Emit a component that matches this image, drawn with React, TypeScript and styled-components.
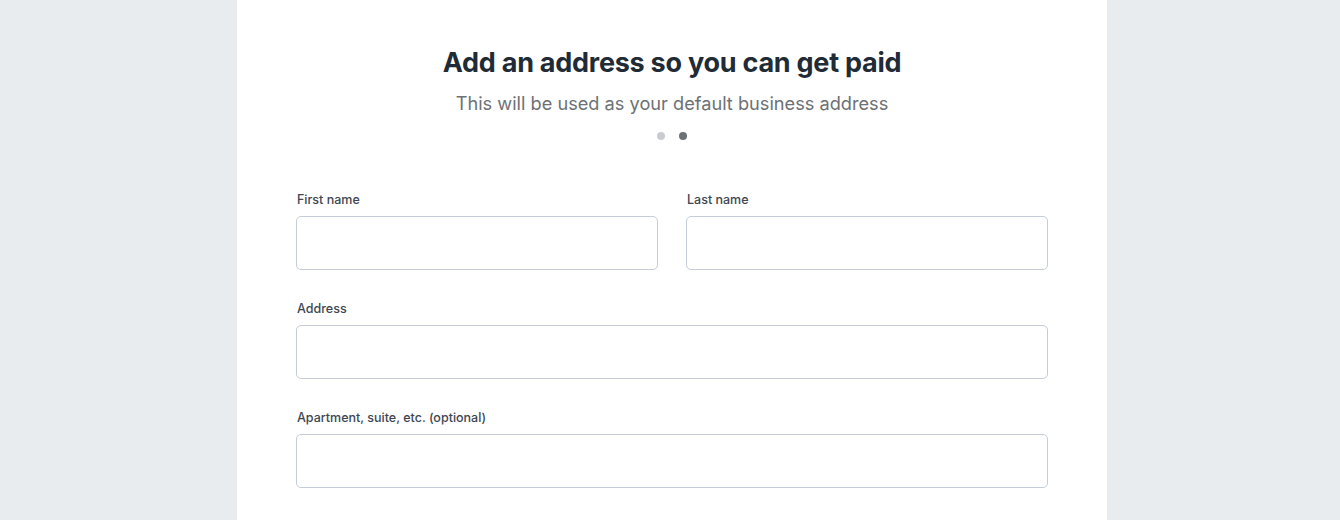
import React from "react";
import styled, { createGlobalStyle } from "styled-components";

const Global = createGlobalStyle`
  html, body { margin: 0; padding: 0; background: #e9ecef; }
  body { font-family: Inter, "Noto Sans", sans-serif; }
`;

const Page = styled.div`
  display: flex;
  justify-content: center;
  padding-left: 4px;
  min-height: 520px;
`;

const Card = styled.main`
  width: 870px;
  background: #ffffff;
  padding: 45px 59px 32px;
  box-sizing: border-box;
`;

const Title = styled.h1`
  margin: 0;
  text-align: center;
  font-size: 27px;
  line-height: 36px;
  font-weight: 700;
  color: #212b36;
  letter-spacing: -0.25px;
`;

const Subtitle = styled.p`
  margin: 10px 0 0;
  text-align: center;
  font-size: 18.2px;
  line-height: 24px;
  font-weight: 400;
  color: #6d7175;
`;

const Dots = styled.div`
  display: flex;
  justify-content: center;
  gap: 14px;
  margin-top: 17px;
`;

const Dot = styled.span<{ $active?: boolean }>`
  width: 8px;
  height: 8px;
  border-radius: 50%;
  background: ${(p) => (p.$active ? "#6d7175" : "#c9ccd0")};
`;

const Form = styled.form`
  margin-top: 52px;
  display: flex;
  flex-direction: column;
  gap: 31px;
`;

const Row = styled.div`
  display: grid;
  grid-template-columns: 1fr 1fr;
  gap: 28px;
`;

const Field = styled.label`
  display: flex;
  flex-direction: column;
  gap: 8px;
`;

const Label = styled.span`
  font-size: 12.5px;
  line-height: 16px;
  font-weight: 500;
  color: #3d4651;
  padding-left: 1px;
`;

const Input = styled.input`
  height: 54px;
  box-sizing: border-box;
  border: 1px solid #c4cdd5;
  border-radius: 5px;
  background: #fff;
  padding: 0 14px;
  font-size: 15px;
  font-family: inherit;
  outline: none;
`;

export default function App() {
  return (
    <>
      <Global />
      <Page>
        <Card>
          <Title>Add an address so you can get paid</Title>
          <Subtitle>This will be used as your default business address</Subtitle>
          <Dots>
            <Dot />
            <Dot $active />
          </Dots>
          <Form onSubmit={(e) => e.preventDefault()}>
            <Row>
              <Field>
                <Label>First name</Label>
                <Input type="text" />
              </Field>
              <Field>
                <Label>Last name</Label>
                <Input type="text" />
              </Field>
            </Row>
            <Field>
              <Label>Address</Label>
              <Input type="text" />
            </Field>
            <Field>
              <Label>Apartment, suite, etc. (optional)</Label>
              <Input type="text" />
            </Field>
          </Form>
        </Card>
      </Page>
    </>
  );
}
